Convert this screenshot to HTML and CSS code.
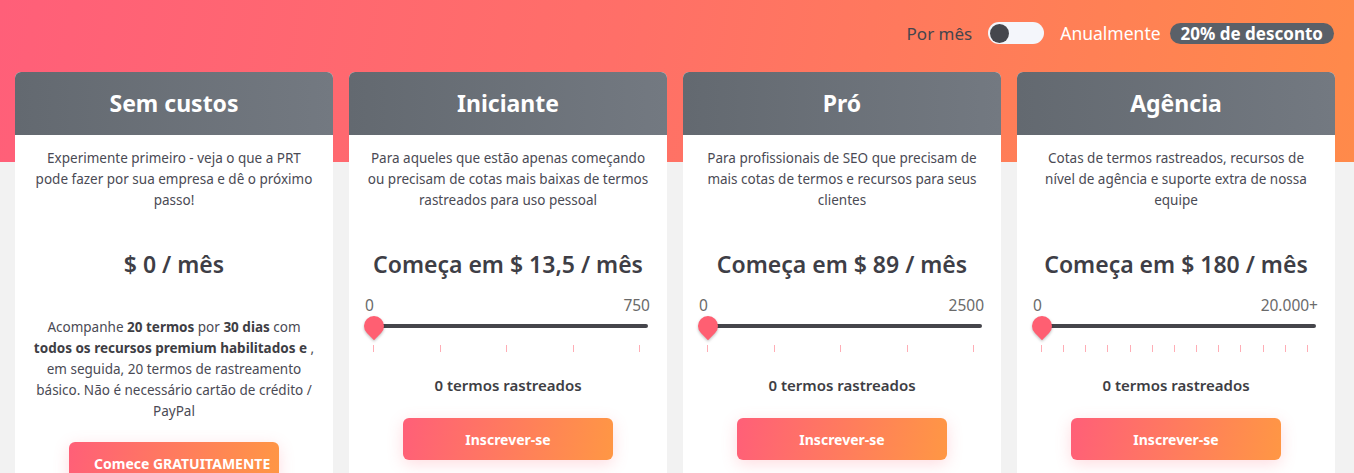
FILE: index.html
```html
<!DOCTYPE html>
<html lang="pt">
<head>
<meta charset="utf-8">
<title>Preços</title>
<link rel="stylesheet" href="styles.css">
</head>
<body>
<div class="page">
  <div class="billing">
    <span class="bill-label">Por mês</span>
    <span class="switch"><span class="knob"></span></span>
    <span class="bill-label light">Anualmente</span>
    <span class="badge">20% de desconto</span>
  </div>
  <div class="cards">
    <div class="card">
      <div class="card-head">Sem custos</div>
      <div class="card-body">
        <p class="desc">Experimente primeiro - veja o que a PRT pode fazer por sua empresa e dê o próximo passo!</p>
        <div class="price">$ 0 / mês</div>
        <p class="free-text">Acompanhe <b>20 termos</b> por <b>30 dias</b> com <b>todos os recursos premium habilitados e</b> , em seguida, 20 termos de rastreamento básico. Não é necessário cartão de crédito / PayPal</p>
        <button class="cta cta-free">Comece GRATUITAMENTE</button>
      </div>
    </div>
    <div class="card">
      <div class="card-head">Iniciante</div>
      <div class="card-body">
        <p class="desc">Para aqueles que estão apenas começando ou precisam de cotas mais baixas de termos rastreados para uso pessoal</p>
        <div class="price">Começa em $ 13,5 / mês</div>
        <div class="slider">
          <div class="slider-labels"><span>0</span><span>750</span></div>
          <div class="track"><span class="thumb"></span></div>
          <div class="ticks"><i></i><i></i><i></i><i></i><i></i></div>
        </div>
        <div class="tracked">0 termos rastreados</div>
        <button class="cta">Inscrever-se</button>
      </div>
    </div>
    <div class="card">
      <div class="card-head">Pró</div>
      <div class="card-body">
        <p class="desc">Para profissionais de SEO que precisam de mais cotas de termos e recursos para seus clientes</p>
        <div class="price">Começa em $ 89 / mês</div>
        <div class="slider">
          <div class="slider-labels"><span>0</span><span>2500</span></div>
          <div class="track"><span class="thumb"></span></div>
          <div class="ticks"><i></i><i></i><i></i><i></i><i></i></div>
        </div>
        <div class="tracked">0 termos rastreados</div>
        <button class="cta">Inscrever-se</button>
      </div>
    </div>
    <div class="card">
      <div class="card-head">Agência</div>
      <div class="card-body">
        <p class="desc">Cotas de termos rastreados, recursos de nível de agência e suporte extra de nossa equipe</p>
        <div class="price">Começa em $ 180 / mês</div>
        <div class="slider">
          <div class="slider-labels"><span>0</span><span>20.000+</span></div>
          <div class="track"><span class="thumb"></span></div>
          <div class="ticks"><i></i><i></i><i></i><i></i><i></i><i></i><i></i><i></i><i></i><i></i><i></i><i></i><i></i></div>
        </div>
        <div class="tracked">0 termos rastreados</div>
        <button class="cta">Inscrever-se</button>
      </div>
    </div>
  </div>
</div>
</body>
</html>
```
FILE: styles.css
```css
* { box-sizing: border-box; }
html, body { margin: 0; padding: 0; }
body {
  font-family: "Noto Sans", "Open Sans", sans-serif;
  background: #f2f2f2;
  overflow: hidden;
  height: 473px;
}
.page {
  background: linear-gradient(100deg, #ff5f79 0%, #ff6f68 45%, #ff8a4a 100%) top left / 100% 162px no-repeat, #f2f2f2;
  min-height: 473px;
}
.billing {
  display: flex;
  justify-content: flex-end;
  align-items: center;
  height: 22px;
  margin: 0 20px 0 0;
  position: relative;
  top: 22px;
  margin-bottom: 50px;
}
.bill-label { font-size: 17px; color: #45454d; }
.bill-label.light { color: #fff; margin-left: 16px; font-size: 17.5px; }
.switch {
  width: 56px; height: 22px;
  margin-left: 16px;
  border-radius: 11px;
  background: #f4f6fb;
  display: flex; align-items: center;
  padding-left: 2px;
}
.knob { width: 19px; height: 19px; border-radius: 50%; background: #45474d; }
.badge {
  margin-left: 9px;
  background: #5a6068;
  color: #fff;
  font-weight: 700;
  font-size: 17px;
  height: 21px;
  line-height: 21px;
  padding: 0 11px;
  border-radius: 11px;
}
.cards {
  display: grid;
  grid-template-columns: repeat(4, 318px);
  column-gap: 16px;
  padding-left: 15px;
}
.card { background: #fff; border-radius: 6px 6px 0 0; overflow: hidden; height: 401px; }
.card-head {
  height: 63px;
  padding-bottom: 2px;
  background: linear-gradient(90deg, #636970, #737981);
  color: #fff;
  font-size: 23px;
  font-weight: 700;
  display: flex; align-items: center; justify-content: center;
}
.card-body { padding: 13px 17px 0 17px; text-align: center; color: #4a4a54; }
.desc { margin: 0; font-size: 13.5px; line-height: 21px; height: 63px; }
.price { margin-top: 38px; font-size: 23px; line-height: 30px; font-weight: 600; color: #3e3e46; }
.free-text { margin: 38px 0 0; font-size: 13.5px; line-height: 21px; }
.free-text b { font-weight: 700; color: #3e3e44; }
.slider { margin-top: 17px; }
.slider-labels {
  display: flex; justify-content: space-between;
  font-size: 15.5px; line-height: 18px; color: #6a6a6a;
  margin-left: -1px;
}
.track {
  position: relative;
  height: 4px;
  margin: 10px 2px 0 7px;
  background: #45454b;
  border-radius: 2px;
}
.thumb {
  position: absolute;
  left: -9px; top: -8px;
  width: 20px; height: 20px;
  background: #ff5f72;
  border-radius: 50% 50% 50% 0;
  transform: rotate(-45deg);
  box-shadow: -1px 1px 3px rgba(0,0,0,0.25);
}
.ticks {
  display: flex; justify-content: space-between;
  width: 267px;
  margin: 17px 0 0 7px;
  height: 7px;
}
.ticks i { width: 1px; height: 7px; background: #ffadb5; }
.tracked { margin-top: 23px; font-size: 15px; line-height: 20px; font-weight: 600; color: #3e3e44; }
.cta {
  display: block;
  margin: 23px auto 0;
  width: 210px; height: 42px;
  border: 0; border-radius: 6px;
  background: linear-gradient(100deg, #ff5f78, #ff9744);
  color: #fff;
  font-family: inherit;
  font-size: 14px; font-weight: 700;
  box-shadow: 0 4px 16px rgba(255, 96, 112, 0.22);
}
.cta-free { margin-top: 20px; padding: 0 0 0 25px; text-align: left; line-height: 44px; }
```
